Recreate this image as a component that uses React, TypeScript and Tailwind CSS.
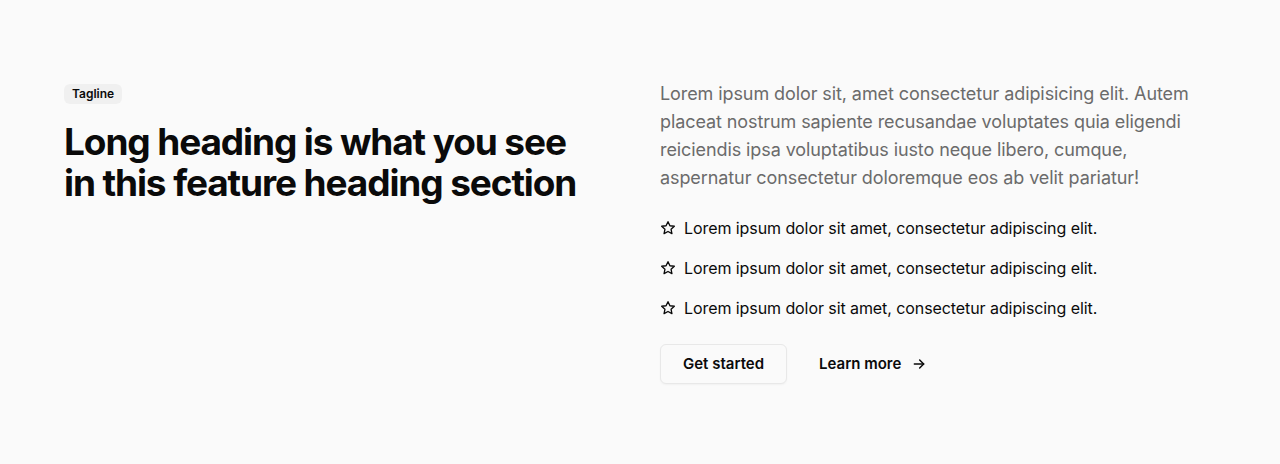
import React from "react";

function Star() {
  return (
    <svg width="16" height="16" viewBox="0 0 24 24" fill="none" stroke="currentColor" strokeWidth="2" strokeLinecap="round" strokeLinejoin="round" className="shrink-0">
      <path d="M12 2.5l2.9 6.1 6.6.8-4.9 4.5 1.3 6.6L12 17.2l-5.9 3.3 1.3-6.6-4.9-4.5 6.6-.8z" />
    </svg>
  );
}

function Arrow() {
  return (
    <svg width="16" height="16" viewBox="0 0 24 24" fill="none" stroke="currentColor" strokeWidth="2.2" strokeLinecap="round" strokeLinejoin="round">
      <path d="M5 12h14" />
      <path d="M13 6l6 6-6 6" />
    </svg>
  );
}

export default function App() {
  const items = [
    "Lorem ipsum dolor sit amet, consectetur adipiscing elit.",
    "Lorem ipsum dolor sit amet, consectetur adipiscing elit.",
    "Lorem ipsum dolor sit amet, consectetur adipiscing elit.",
  ];
  return (
    <div className="min-h-[464px] bg-[#fafafa] text-[#0a0a0a]" style={{ fontFamily: "Inter, 'Noto Sans', sans-serif" }}>
      <section className="px-16 py-20">
        <div className="grid grid-cols-2 gap-10">
          <div>
            <span className="inline-block rounded-md bg-[#f0f0f0] px-2 py-[2px] text-xs font-semibold leading-4">Tagline</span>
            <h1 className="mt-[17px] max-w-[525px] text-[37px] font-bold leading-[41px] tracking-[-0.03em]">
              Long heading is what you see in this feature heading section
            </h1>
          </div>
          <div>
            <p className="text-lg leading-7 tracking-[-0.005em] text-[#6b6b6b]">
              Lorem ipsum dolor sit, amet consectetur adipisicing elit. Autem placeat nostrum sapiente recusandae voluptates quia eligendi reiciendis ipsa voluptatibus iusto neque libero, cumque, aspernatur consectetur doloremque eos ab velit pariatur!
            </p>
            <ul className="mt-6 flex flex-col gap-4">
              {items.map((t, i) => (
                <li key={i} className="flex items-center gap-2 text-base leading-6 tracking-[-0.005em]">
                  <Star />
                  <span>{t}</span>
                </li>
              ))}
            </ul>
            <div className="mt-6 flex items-center gap-2">
              <button className="rounded-md border border-[#e8e8e8] bg-[#fafafa] px-[22px] py-[7px] text-[15px] font-semibold leading-6 shadow-[0_1px_2px_rgba(0,0,0,0.04)]">
                Get started
              </button>
              <button className="flex items-center gap-2.5 px-6 py-[7px] text-[15px] font-semibold leading-6">
                Learn more
                <Arrow />
              </button>
            </div>
          </div>
        </div>
      </section>
    </div>
  );
}
